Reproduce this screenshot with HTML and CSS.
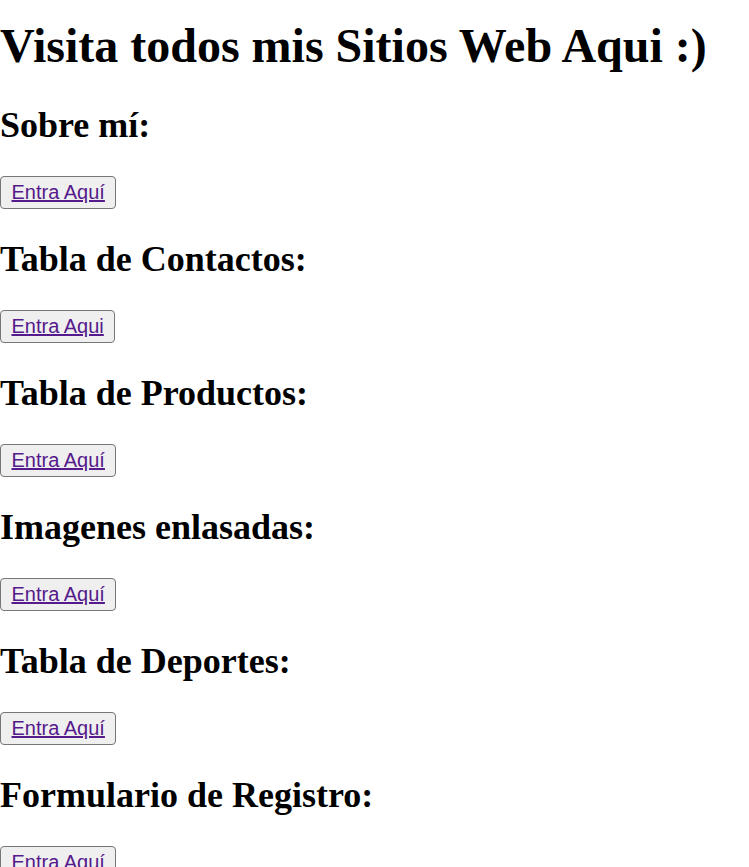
FILE: index.html
```html
<!DOCTYPE html>
<html lang="es">
<head>
<meta charset="utf-8">
<title>Mis Sitios Web</title>
<link rel="stylesheet" href="styles.css">
</head>
<body>
<h1 class="title">Visita todos mis Sitios Web Aqui :)</h1>
<h2 class="section">Sobre mí:</h2>
<div class="row"><button class="btn"><a class="link" href="#">Entra Aquí</a></button></div>
<h2 class="section">Tabla de Contactos:</h2>
<div class="row"><button class="btn"><a class="link" href="#">Entra Aqui</a></button></div>
<h2 class="section">Tabla de Productos:</h2>
<div class="row"><button class="btn"><a class="link" href="#">Entra Aquí</a></button></div>
<h2 class="section">Imagenes enlasadas:</h2>
<div class="row"><button class="btn"><a class="link" href="#">Entra Aquí</a></button></div>
<h2 class="section">Tabla de Deportes:</h2>
<div class="row"><button class="btn"><a class="link" href="#">Entra Aquí</a></button></div>
<h2 class="section">Formulario de Registro:</h2>
<div class="row"><button class="btn"><a class="link" href="#">Entra Aquí</a></button></div>
</body>
</html>
```
FILE: styles.css
```css
html, body {
  margin: 0;
  padding: 0;
  background: #ffffff;
}
body {
  font-family: "Liberation Serif", "Times New Roman", serif;
  color: #000000;
}
.title {
  font-size: 48px;
  font-weight: bold;
  margin: 18px 0 32px;
  line-height: 55px;
}
.section {
  font-size: 36px;
  font-weight: bold;
  margin: 0;
  line-height: 41px;
}
.row {
  margin: 30px 0 30px;
  height: 33px;
}
.btn {
  font-family: "Liberation Sans", Arial, sans-serif;
  font-size: 20px;
  height: 33px;
  padding: 0 10.5px 1px;
  margin: 0;
  border: 1px solid #767676;
  border-radius: 4px;
  background: #efefef;
  display: block;
}
.link {
  color: #551a8b;
  text-decoration: underline;
}
```
